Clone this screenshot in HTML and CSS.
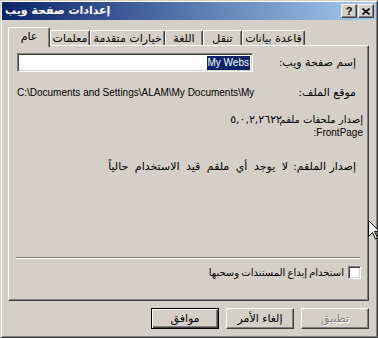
FILE: index.html
```html
<!DOCTYPE html>
<html lang="ar">
<head>
<meta charset="utf-8">
<title>إعدادات صفحة ويب</title>
<link rel="stylesheet" href="styles.css">
</head>
<body>
<div class="window">
  <div class="titlebar">
    <span class="title">إعدادات صفحة ويب</span>
    <div class="caption-buttons">
      <span class="cap-btn help">?</span>
      <span class="cap-btn close"><svg width="8" height="7" viewBox="0 0 8 7"><path d="M0.5 0.5 L7.5 6.5 M7.5 0.5 L0.5 6.5" stroke="#000" stroke-width="1.6" fill="none"/></svg></span>
    </div>
  </div>
  <div class="content">
    <div class="tabs">
      <div class="tab active tab-general">عام</div>
      <div class="tab tab-params">معلمات</div>
      <div class="tab tab-advanced">خيارات متقدمة</div>
      <div class="tab tab-lang">اللغة</div>
      <div class="tab tab-nav">تنقل</div>
      <div class="tab tab-db">قاعدة بيانات</div>
    </div>
    <div class="panel">
      <div class="form">
        <div class="row row-name">
          <div class="label">إسم صفحة ويب:</div>
          <div class="field"><span class="sel" dir="ltr">My Webs</span></div>
        </div>
        <div class="row row-path">
          <div class="label">موقع الملف:</div>
          <div class="value path" dir="ltr">C:\Documents and Settings\ALAM\My Documents\My</div>
        </div>
        <div class="row row-ext">
          <div class="label label-wide">إصدار ملحقات ملقم<br><span dir="ltr">:FrontPage</span></div>
          <div class="value"><span dir="ltr">٥,٠,٢,٢٦٢٢</span></div>
        </div>
        <div class="row row-server">
          <div class="label">إصدار الملقم:</div>
          <div class="value server">لا يوجد أي ملقم قيد الاستخدام حالياً</div>
        </div>
      </div>
      <div class="bottom">
        <div class="sep"></div>
        <div class="check-row">
          <span class="checkbox"></span>
          <span class="check-label">استخدام إيداع المستندات وسحبها</span>
        </div>
      </div>
    </div>
    <div class="buttons">
      <button class="btn default">موافق</button>
      <button class="btn">إلغاء الأمر</button>
      <button class="btn disabled">تطبيق</button>
    </div>
  </div>
  <svg class="cursor" width="12" height="20" viewBox="0 0 12 20"><path d="M0.5 0.5 L0.5 16.5 L4.5 12.5 L7.5 19 L9.5 18 L6.5 11.5 L11.5 11.5 Z" fill="#fff" stroke="#000" stroke-width="1"/></svg>
</div>
</body>
</html>
```
FILE: styles.css
```css
html, body {
  margin: 0;
  padding: 0;
  overflow: hidden;
}
body {
  width: 378px;
  height: 338px;
  background: #d4d0c8;
  color: #000;
  font: 11px "Liberation Sans", "DejaVu Sans", sans-serif;
}
.window {
  position: relative;
  width: 378px;
  height: 338px;
  box-sizing: border-box;
  background: #d4d0c8;
  border: 1px solid;
  border-color: #d4d0c8 #404040 #404040 #d4d0c8;
  box-shadow: inset 1px 1px #fff, inset -1px -1px #808080;
  padding: 1px;
  overflow: hidden;
}
.titlebar {
  height: 18px;
  display: flex;
  align-items: center;
  justify-content: space-between;
  background: linear-gradient(to right, #0a246a, #a6caf0);
  padding: 0 2px 0 3px;
}
.title {
  color: #fff;
  font-weight: bold;
  font-family: "DejaVu Sans", sans-serif;
  font-size: 11px;
  direction: rtl;
  line-height: 18px;
}
.caption-buttons {
  display: flex;
  gap: 1px;
}
.cap-btn {
  width: 16px;
  height: 14px;
  box-sizing: border-box;
  background: #d4d0c8;
  border: 1px solid;
  border-color: #fff #404040 #404040 #fff;
  box-shadow: inset -1px -1px #808080;
  display: flex;
  align-items: center;
  justify-content: center;
  font: bold 11px "Liberation Sans", sans-serif;
  line-height: 12px;
}
.content {
  padding: 7px 7px 0 6px;
}
.tabs {
  display: flex;
  height: 18px;
  align-items: flex-end;
  position: relative;
  z-index: 1;
}
.tab {
  box-sizing: border-box;
  height: 15px;
  background: #d4d0c8;
  border-left: 1px solid #fff;
  border-top: 1px solid #fff;
  border-right: 1px solid #404040;
  box-shadow: inset -1px 0 #808080;
  border-radius: 2px 2px 0 0;
  text-align: center;
  padding-top: 1px;
  line-height: 13px;
  font-family: "DejaVu Sans", sans-serif;
  white-space: nowrap;
}
.tab.active {
  height: 20px;
  margin-bottom: -2px;
  padding-top: 2px;
  align-self: flex-start;
}
.tab-general { width: 42px; }
.tab-params { width: 40px; }
.tab-advanced { width: 75px; }
.tab-lang { width: 38px; }
.tab-nav { width: 39px; }
.tab-db { width: 63px; }
.panel {
  box-sizing: border-box;
  width: 361px;
  height: 256px;
  border: 1px solid;
  border-color: #fff #404040 #404040 #fff;
  box-shadow: inset -1px -1px #808080;
  display: flex;
  flex-direction: column;
  padding-bottom: 21px;
}
.form {
  direction: rtl;
  display: flex;
  flex-direction: column;
  padding: 7px 5px 0 8px;
  font-family: "DejaVu Sans", sans-serif;
}
.row {
  display: flex;
  align-items: center;
  column-gap: 12px;
}
.label {
  width: 56px;
  margin-right: 7px;
  flex: none;
  white-space: nowrap;
  line-height: 14px;
}
.value {
  flex: 1;
  line-height: 14px;
  white-space: nowrap;
  min-width: 0;
}
.field {
  flex: 1;
  height: 19px;
  box-sizing: border-box;
  margin-right: 35px;
  background: #fff;
  border: 1px solid;
  border-color: #808080 #fff #fff #808080;
  box-shadow: inset 1px 1px #404040, inset -1px -1px #d4d0c8;
  display: flex;
  align-items: center;
  padding: 0 2px;
}
.sel {
  background: #0a246a;
  color: #fff;
  font: 10px "Liberation Sans", sans-serif;
  line-height: 14px;
  padding: 0 1px;
}
.row-path {
  margin-top: 14px;
}
.path {
  margin-right: 33px;
  overflow: hidden;
  text-align: left;
  font: 10px "Liberation Sans", sans-serif;
  line-height: 14px;
}
.row-ext {
  margin-top: 13px;
  align-items: flex-start;
  column-gap: 11px;
}
.label-wide {
  width: 70px;
  margin-right: 0;
  line-height: 13px;
  font-size: 10px;
}
.label-wide span {
  font: 10px "Liberation Sans", sans-serif;
}
.row-ext .value {
  line-height: 13px;
}
.row-server {
  margin-top: 21px;
}
.server {
  word-spacing: 3px;
}
.bottom {
  margin-top: auto;
}
.sep {
  height: 0;
  border-top: 1px solid #808080;
  border-bottom: 1px solid #fff;
  margin: 0 8px 0 7px;
}
.check-row {
  direction: rtl;
  display: flex;
  align-items: center;
  gap: 4px;
  margin: 7px 7px 0 0;
  font-family: "DejaVu Sans", sans-serif;
}
.checkbox {
  width: 13px;
  height: 13px;
  box-sizing: border-box;
  background: #fff;
  border: 1px solid;
  border-color: #808080 #fff #fff #808080;
  box-shadow: inset 1px 1px #404040, inset -1px -1px #d4d0c8;
  flex: none;
}
.check-label {
  line-height: 13px;
  font-size: 10px;
  word-spacing: -1px;
}
.buttons {
  display: flex;
  justify-content: flex-end;
  gap: 7px;
  margin-top: 7px;
}
.btn {
  width: 68px;
  height: 21px;
  box-sizing: border-box;
  margin: 0;
  padding: 0;
  background: #d4d0c8;
  border: 1px solid;
  border-color: #fff #404040 #404040 #fff;
  box-shadow: inset -1px -1px #808080;
  font: 11px "DejaVu Sans", sans-serif;
  color: #000;
  direction: rtl;
}
.btn.default {
  border-color: #000;
  box-shadow: inset 1px 1px #fff, inset -1px -1px #404040, inset -2px -2px #808080;
}
.btn.disabled {
  color: #808080;
  text-shadow: 1px 1px #fff;
}
.cursor {
  position: absolute;
  left: 367px;
  top: 219px;
}
```
